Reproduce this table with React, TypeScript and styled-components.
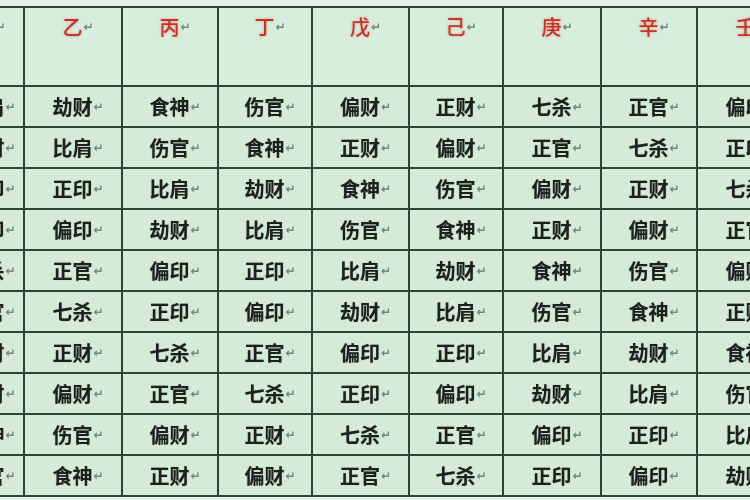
import * as React from 'react';
import styled, { createGlobalStyle } from 'styled-components';

const GlobalStyle = createGlobalStyle`
  html, body {
    margin: 0;
    padding: 0;
    background: #e1f1e5;
  }
`;

const Page = styled.div`
  width: 750px;
  height: 500px;
  overflow: hidden;
  background: #e1f1e5;
`;

const Grid = styled.div`
  display: grid;
  grid-template-columns: 76px 96px 94px 92px 95px 92px 96px 94px 96px 96px;
  grid-template-rows: 77px repeat(10, 39px);
  gap: 2px;
  width: max-content;
  margin: 6px 0 0 -55px;
  border: 2px solid #2c4634;
  background: #2c4634;
  filter: blur(0.3px);
`;

const Cell = styled.div<{ $head?: boolean }>`
  display: flex;
  justify-content: center;
  align-items: ${(p) => (p.$head ? 'flex-start' : 'center')};
  padding-top: ${(p) => (p.$head ? '7px' : '0')};
  background: ${(p) => (p.$head ? '#d7eedd' : '#d5ebd8')};
  font-family: 'Noto Sans CJK SC', 'Noto Sans CJK JP', sans-serif;
  font-size: 20px;
  line-height: 24px;
  font-weight: ${(p) => (p.$head ? 500 : 700)};
  color: ${(p) => (p.$head ? '#c0362c' : '#1d211e')};
  text-shadow: ${(p) =>
    p.$head ? '0 0 3px rgba(236, 120, 110, 0.75)' : '0 0 1px rgba(40, 50, 44, 0.45)'};
  white-space: nowrap;
`;

// Word paragraph mark hanging after the text, not counted for centring
const Mark = styled.span`
  display: inline-block;
  width: 11px;
  margin-right: -11px;
  padding-left: 1px;
  font-family: 'DejaVu Sans', sans-serif;
  font-size: 12px;
  font-weight: bold;
  line-height: 24px;
  color: #74897e;
  text-shadow: none;
`;

const stems = ['甲', '乙', '丙', '丁', '戊', '己', '庚', '辛', '壬', '癸'];

const rows: string[][] = [
  ['比肩', '劫财', '食神', '伤官', '偏财', '正财', '七杀', '正官', '偏印', '正印'],
  ['劫财', '比肩', '伤官', '食神', '正财', '偏财', '正官', '七杀', '正印', '偏印'],
  ['偏印', '正印', '比肩', '劫财', '食神', '伤官', '偏财', '正财', '七杀', '正官'],
  ['正印', '偏印', '劫财', '比肩', '伤官', '食神', '正财', '偏财', '正官', '七杀'],
  ['七杀', '正官', '偏印', '正印', '比肩', '劫财', '食神', '伤官', '偏财', '正财'],
  ['正官', '七杀', '正印', '偏印', '劫财', '比肩', '伤官', '食神', '正财', '偏财'],
  ['偏财', '正财', '七杀', '正官', '偏印', '正印', '比肩', '劫财', '食神', '伤官'],
  ['正财', '偏财', '正官', '七杀', '正印', '偏印', '劫财', '比肩', '伤官', '食神'],
  ['食神', '伤官', '偏财', '正财', '七杀', '正官', '偏印', '正印', '比肩', '劫财'],
  ['伤官', '食神', '正财', '偏财', '正官', '七杀', '正印', '偏印', '劫财', '比肩'],
];

const App = () => (
  <Page>
    <GlobalStyle />
    <Grid>
      {stems.map((s) => (
        <Cell key={'h' + s} $head>
          {s}
          <Mark>↵</Mark>
        </Cell>
      ))}
      {rows.map((row, i) =>
        row.map((v, j) => (
          <Cell key={i + '-' + j}>
            {v}
            <Mark>↵</Mark>
          </Cell>
        ))
      )}
    </Grid>
  </Page>
);

export default App;
